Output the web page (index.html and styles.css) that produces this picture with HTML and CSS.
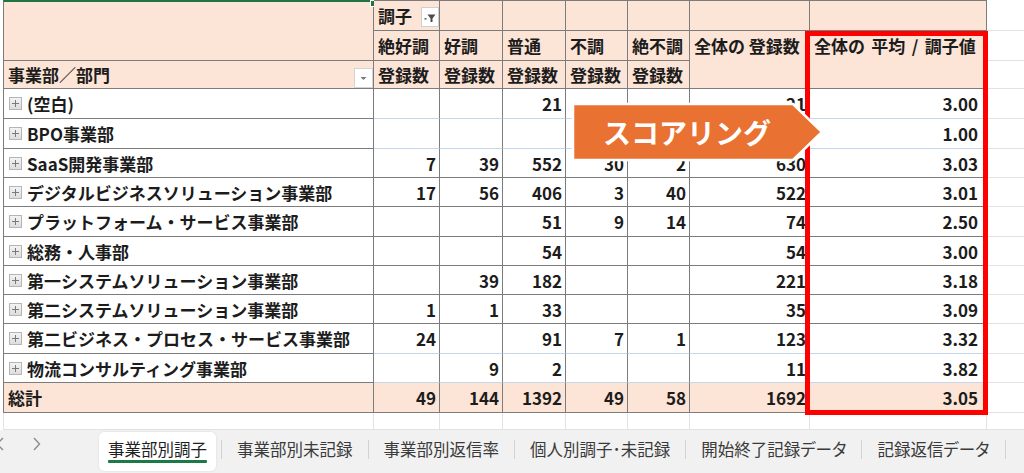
FILE: index.html
```html
<!DOCTYPE html>
<html lang="ja">
<head>
<meta charset="utf-8">
<title>事業部別調子</title>
<link rel="stylesheet" href="styles.css">
</head>
<body>
<div class="page">
  <div class="sheet">
    <!-- header row A -->
    <div class="cell hd first top span2 sel"></div>
    <div class="cell hd top split"><span>調子</span><span class="filter-btn"><svg width="16" height="18" viewBox="0 0 16 18"><rect x="2.5" y="10" width="2" height="1.6" fill="#6a6a6a"/><polygon points="5.5,6.5 13.5,6.5 10.5,10.5 10.5,14 8.5,14 8.5,10.5" fill="#4d4d4d"/></svg></span></div>
    <div class="cell hd top"></div>
    <div class="cell hd top"></div>
    <div class="cell hd top"></div>
    <div class="cell hd top"></div>
    <div class="cell hd top"></div>
    <div class="cell hd top"></div>
    <div class="cell fill"></div>
    <!-- header row B -->
    <div class="cell hd">絶好調</div>
    <div class="cell hd">好調</div>
    <div class="cell hd">普通</div>
    <div class="cell hd">不調</div>
    <div class="cell hd">絶不調</div>
    <div class="cell hd span2 tall">全体の 登録数</div>
    <div class="cell hd span2 tall wide">全体の 平均 / 調子値</div>
    <div class="cell fill"></div>
    <!-- header row C -->
    <div class="cell hd first">事業部／部門<span class="dd-btn"><svg width="17" height="18" viewBox="0 0 17 18"><polygon points="5.5,8 11.5,8 8.5,11" fill="#7a7a7a"/></svg></span></div>
    <div class="cell hd">登録数</div>
    <div class="cell hd">登録数</div>
    <div class="cell hd">登録数</div>
    <div class="cell hd">登録数</div>
    <div class="cell hd">登録数</div>
    <div class="cell fill"></div>

    <!-- data rows -->
    <div class="cell first name"><span class="plus"></span>(空白)</div>
    <div class="cell num lbb"></div><div class="cell num lbb"></div><div class="cell num lbb">21</div><div class="cell num lbb"></div><div class="cell num lbb"></div><div class="cell num lbb">21</div><div class="cell num lbb avg">3.00</div>
    <div class="cell fill"></div>

    <div class="cell first name"><span class="plus"></span>BPO事業部</div>
    <div class="cell num lbb"></div><div class="cell num lbb"></div><div class="cell num lbb"></div><div class="cell num lbb"></div><div class="cell num lbb"></div><div class="cell num lbb"></div><div class="cell num lbb avg">1.00</div>
    <div class="cell fill"></div>

    <div class="cell first name"><span class="plus"></span>SaaS開発事業部</div>
    <div class="cell num">7</div><div class="cell num">39</div><div class="cell num">552</div><div class="cell num">30</div><div class="cell num">2</div><div class="cell num">630</div><div class="cell num avg">3.03</div>
    <div class="cell fill"></div>

    <div class="cell first name"><span class="plus"></span>デジタルビジネスソリューション事業部</div>
    <div class="cell num">17</div><div class="cell num">56</div><div class="cell num">406</div><div class="cell num">3</div><div class="cell num">40</div><div class="cell num">522</div><div class="cell num avg">3.01</div>
    <div class="cell fill"></div>

    <div class="cell first name"><span class="plus"></span>プラットフォーム・サービス事業部</div>
    <div class="cell num"></div><div class="cell num"></div><div class="cell num">51</div><div class="cell num">9</div><div class="cell num">14</div><div class="cell num">74</div><div class="cell num avg">2.50</div>
    <div class="cell fill"></div>

    <div class="cell first name"><span class="plus"></span>総務・人事部</div>
    <div class="cell num"></div><div class="cell num"></div><div class="cell num">54</div><div class="cell num"></div><div class="cell num"></div><div class="cell num">54</div><div class="cell num avg">3.00</div>
    <div class="cell fill"></div>

    <div class="cell first name"><span class="plus"></span>第一システムソリューション事業部</div>
    <div class="cell num"></div><div class="cell num">39</div><div class="cell num">182</div><div class="cell num"></div><div class="cell num"></div><div class="cell num">221</div><div class="cell num avg">3.18</div>
    <div class="cell fill"></div>

    <div class="cell first name"><span class="plus"></span>第二システムソリューション事業部</div>
    <div class="cell num">1</div><div class="cell num">1</div><div class="cell num">33</div><div class="cell num"></div><div class="cell num"></div><div class="cell num">35</div><div class="cell num avg">3.09</div>
    <div class="cell fill"></div>

    <div class="cell first name"><span class="plus"></span>第二ビジネス・プロセス・サービス事業部</div>
    <div class="cell num lbb">24</div><div class="cell num lbb"></div><div class="cell num lbb">91</div><div class="cell num lbb">7</div><div class="cell num lbb">1</div><div class="cell num lbb">123</div><div class="cell num lbb avg">3.32</div>
    <div class="cell fill"></div>

    <div class="cell first name"><span class="plus"></span>物流コンサルティング事業部</div>
    <div class="cell num lbb"></div><div class="cell num lbb">9</div><div class="cell num lbb">2</div><div class="cell num lbb"></div><div class="cell num lbb"></div><div class="cell num lbb">11</div><div class="cell num lbb avg">3.82</div>
    <div class="cell fill"></div>

    <!-- total -->
    <div class="cell hd first">総計</div>
    <div class="cell hd num">49</div><div class="cell hd num">144</div><div class="cell hd num">1392</div><div class="cell hd num">49</div><div class="cell hd num">58</div><div class="cell hd num">1692</div><div class="cell hd num avg">3.05</div>
    <div class="cell fill"></div>

    <!-- blank row -->
    <div class="cell blank first"></div>
    <div class="cell blank"></div><div class="cell blank"></div><div class="cell blank"></div><div class="cell blank"></div><div class="cell blank"></div><div class="cell blank"></div><div class="cell blank"></div>
    <div class="cell fill"></div>
  </div>

  <div class="redbox"></div>

  <div class="banner">
    <svg class="banner-shape" width="256" height="60" viewBox="0 0 256 60"><polygon points="2,2 222,2 251,30 222,58 2,58" fill="#e97132" stroke="#ffffff" stroke-width="2.5"/></svg>
    <span class="banner-text">スコアリング</span>
  </div>

  <div class="tabs">
    <div class="tab-nav"><svg width="99" height="41" viewBox="0 0 99 41"><polyline points="3,6 -3,12 3,18" fill="none" stroke="#8c8c8c" stroke-width="1.4"/><polyline points="34,6 39.5,12 34,18" fill="none" stroke="#8c8c8c" stroke-width="1.4"/></svg></div>
    <div class="tab active"><span class="tab-label">事業部別調子</span></div>
    <span class="sep"></span>
    <div class="tab">事業部別未記録</div>
    <span class="sep"></span>
    <div class="tab">事業部別返信率</div>
    <span class="sep"></span>
    <div class="tab">個人別調子･未記録</div>
    <span class="sep"></span>
    <div class="tab">開始終了記録データ</div>
    <span class="sep"></span>
    <div class="tab">記録返信データ</div>
    <span class="sep"></span>
  </div>
</div>
</body>
</html>
```

FILE: styles.css
```css
:root {
  --dk: #7c7c7c;
  --lb: #c4d7ec;
  --lg: #e2e2e2;
  --peach: #fce4d6;
}

* { box-sizing: border-box; }

html, body {
  margin: 0;
  padding: 0;
}

body {
  width: 1024px;
  height: 473px;
  overflow: hidden;
  background: #ffffff;
  font-family: "Noto Sans CJK JP", "Noto Sans", sans-serif;
  color: #1c1c1c;
}

.page {
  position: relative;
  width: 1024px;
  height: 473px;
}

.sheet {
  display: grid;
  margin-left: 3px;
  height: 430px;
  grid-template-columns: 371px 66px 63px 63px 62px 62px 120px 177px 1fr;
  grid-template-rows: 31px 30px 28px 30px 30px 29px 29px 30px 29px 29px 29px 30px 29px 30px 17px;
  font-size: 17px;
  font-weight: 700;
}

.cell {
  position: relative;
  display: flex;
  align-items: center;
  padding: 0 4px;
  border-right: 1px solid var(--dk);
  border-bottom: 1px solid var(--dk);
  white-space: nowrap;
  line-height: 1;
}

.hd { background: var(--peach); }
.top { border-top: 1px solid var(--dk); }
.first { border-left: 1px solid var(--dk); }
.span2 { grid-row: span 2; }

.tall {
  align-items: flex-start;
  padding-top: 6px;
}

.wide { word-spacing: 2.5px; }

.split {
  justify-content: space-between;
  padding-right: 0;
}

.sel {
  border-top: 2px solid #217346;
}
.sel::after {
  content: "";
  position: absolute;
  right: -4px;
  top: -2px;
  width: 5px;
  height: 5px;
  background: #217346;
  border: 1px solid #ffffff;
}

.filter-btn {
  display: flex;
  align-items: center;
  justify-content: center;
  width: 18px;
  height: 20px;
  margin-top: 2px;
  background: #ffffff;
  border: 1px solid #cfcfcf;
}

.dd-btn {
  position: absolute;
  right: 0;
  bottom: 0;
  width: 19px;
  height: 20px;
  display: flex;
  align-items: center;
  justify-content: center;
  background: #ffffff;
  border: 1px solid #d4d4d4;
}

.name { padding-left: 5px; }

.plus {
  position: relative;
  flex: none;
  width: 13px;
  height: 13px;
  margin-right: 5px;
  border: 1px solid #b5b5b5;
  background: linear-gradient(#f3f3f3, #dddddd);
}
.plus::before,
.plus::after {
  content: "";
  position: absolute;
  background: #7a7a7a;
}
.plus::before { left: 2px; right: 2px; top: 5px; height: 1px; }
.plus::after { top: 2px; bottom: 2px; left: 5px; width: 1px; }

.num {
  justify-content: flex-end;
  padding-right: 3px;
}
.avg { padding-right: 8px; }

.lbb { border-bottom-color: var(--lb); }

.blank {
  border-right-color: var(--lg);
  border-bottom-color: var(--lg);
}
.blank.first { border-left-color: var(--lg); }

.fill {
  border-right: none;
  border-bottom: 1px solid var(--lg);
}

.redbox {
  position: absolute;
  left: 805px;
  top: 31px;
  width: 183px;
  height: 384px;
  border: 5px solid #ff0000;
}

.banner {
  position: absolute;
  left: 571px;
  top: 102px;
  width: 256px;
  height: 60px;
}
.banner-shape {
  display: block;
}
.banner-text {
  position: absolute;
  left: 32px;
  top: 0;
  height: 60px;
  display: flex;
  align-items: center;
  font-size: 28px;
  font-weight: 700;
  color: #ffffff;
  white-space: nowrap;
}

.tabs {
  display: flex;
  align-items: stretch;
  height: 43px;
  padding: 2px 0 2px;
  background: #f1f1f1;
  font-size: 16.5px;
  font-weight: 400;
  color: #3a3a3a;
  font-feature-settings: "palt";
}

.tab-nav {
  width: 99px;
  flex: none;
}
.tab-nav svg { display: block; }

.tab {
  display: flex;
  align-items: center;
  padding: 0 15px 6px;
  white-space: nowrap;
  line-height: 20px;
}

.tab.active {
  padding: 0 9px 6px;
  margin-right: 5px;
  background: #ffffff;
  border-radius: 5px;
  box-shadow: 0 0 2px rgba(0, 0, 0, 0.12);
  color: #1f1f1f;
}

.tab-label {
  position: relative;
}
.tab-label::after {
  content: "";
  position: absolute;
  left: 0;
  right: 0;
  bottom: -4px;
  height: 3px;
  background: #1e7a45;
  border-radius: 1px;
}

.sep {
  flex: none;
  width: 1px;
  height: 19px;
  margin-top: 8px;
  background: #d2d2d2;
}
```
